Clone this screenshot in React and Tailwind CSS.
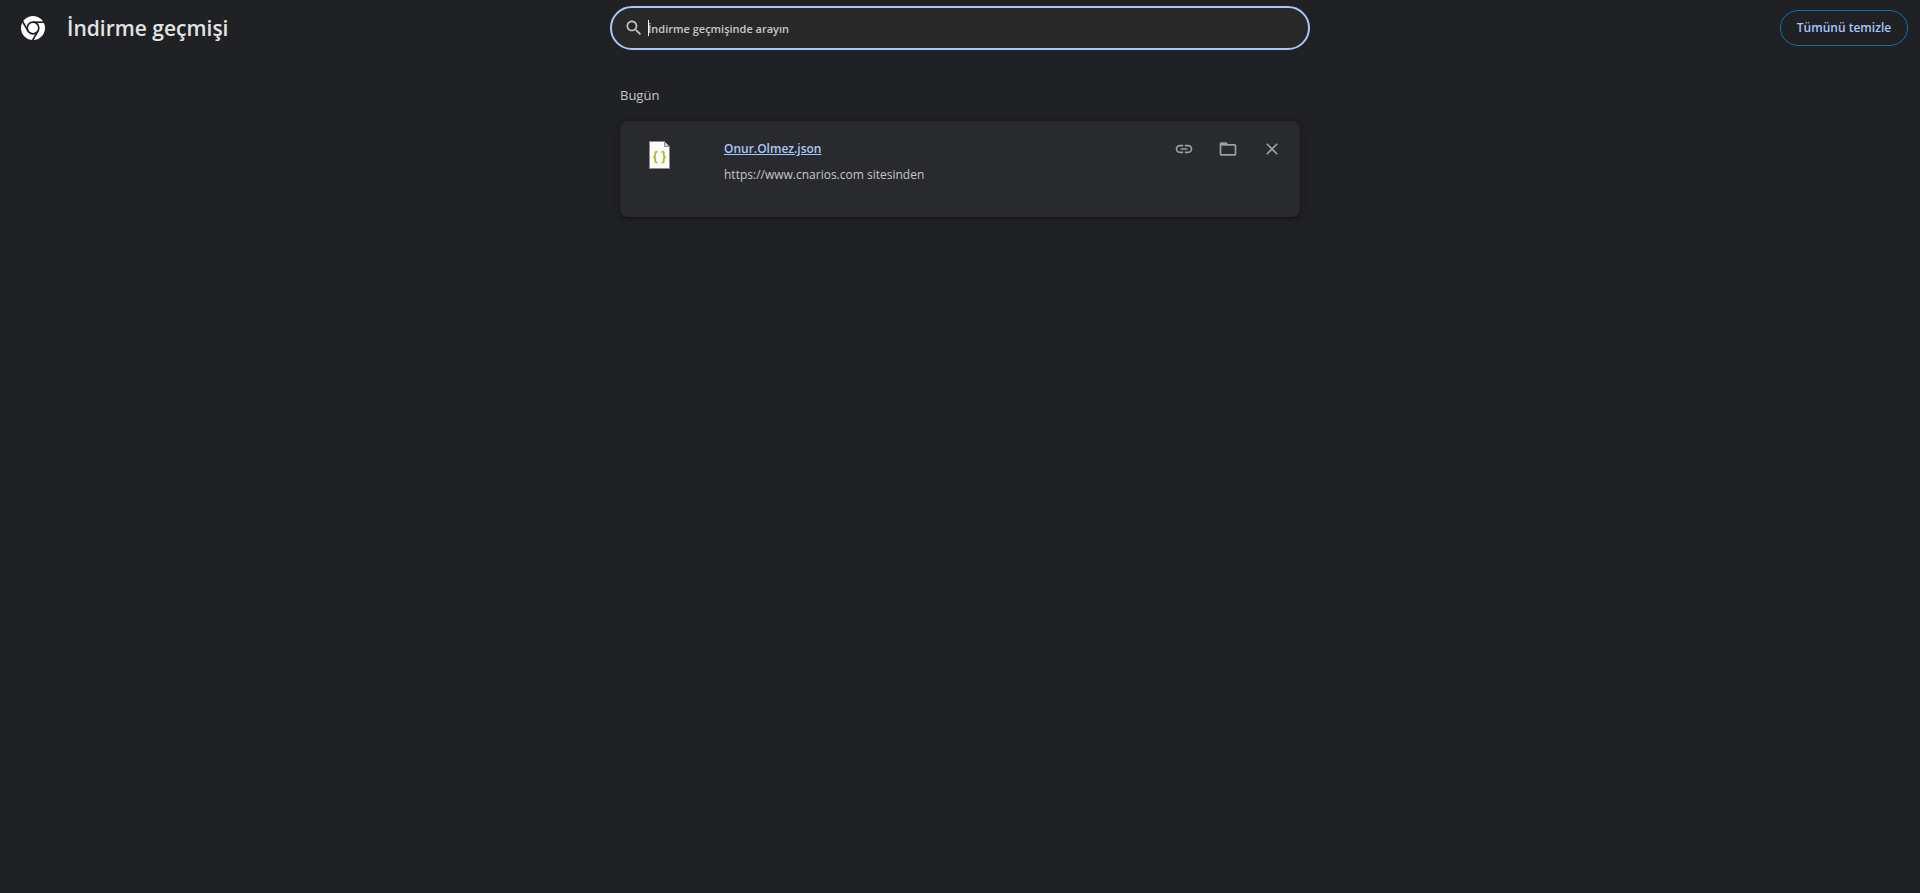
import React from "react";

function ChromeLogo() {
  return (
    <svg viewBox="-12 -12 24 24" className="size-6 shrink-0" aria-hidden="true">
      <circle r="12" fill="#fff" />
      <g fill="none" stroke="#202124" strokeWidth="1.7">
        <circle r="5.8" />
        <path d="M0-5.800H12" />
        <path d="M0-5.800H12" transform="rotate(120)" />
        <path d="M0-5.800H12" transform="rotate(240)" />
      </g>
    </svg>
  );
}

function FileIcon() {
  return (
    <svg viewBox="0 0 32 32" className="size-8" aria-hidden="true">
      <path d="M5.500 2.500H20.500L25.500 7.500V29.500H5.500Z" fill="#fcfcfc" stroke="#8b8c8e" />
      <path d="M20.500 2.500V7.500H25.500Z" fill="#d4d5d6" stroke="#8b8c8e" />
      <path
        d="M13.500 12.800h-.8q-1.500 0-1.500 1.500v2q0 1.700-1.900 1.900q1.900.2 1.900 1.900v2q0 1.500 1.500 1.500h.8M17.500 12.800h.8q1.500 0 1.500 1.500v2q0 1.700 1.900 1.900q-1.900.2-1.900 1.900v2q0 1.500-1.500 1.500h-.8"
        fill="none"
        stroke="#bcb83a"
        strokeWidth="1.9"
      />
    </svg>
  );
}

const actions = [
  {
    label: "İndirme bağlantısını kopyala",
    path: "M3.900 12c0-1.710 1.390-3.100 3.100-3.100h4V7H7c-2.760 0-5 2.240-5 5s2.240 5 5 5h4v-1.900H7c-1.710 0-3.100-1.390-3.100-3.100zM8 13h8v-2H8v2zm9-6h-4v1.900h4c1.710 0 3.100 1.390 3.100 3.100s-1.390 3.100-3.100 3.100h-4V17h4c2.760 0 5-2.240 5-5s-2.240-5-5-5z",
  },
  {
    label: "Klasörde göster",
    path: "M20 6h-8l-2-2H4c-1.100 0-1.990.9-1.990 2L2 18c0 1.100.9 2 2 2h16c1.100 0 2-.9 2-2V8c0-1.100-.9-2-2-2zm0 12H4V8h16v10z",
  },
  {
    label: "Listeden kaldır",
    path: "M19 6.410L17.590 5 12 10.590 6.410 5 5 6.410 10.590 12 5 17.590 6.410 19 12 13.410 17.590 19 19 17.590 13.410 12z",
  },
];

function Toolbar() {
  return (
    <header className="grid h-14 grid-cols-[1fr_minmax(0,700px)_1fr] items-center">
      <div className="flex items-center gap-[22px] pl-[21px]">
        <ChromeLogo />
        <h1 className="text-[21px] leading-8 font-semibold whitespace-nowrap text-[#e3e3e3]">
          İndirme geçmişi
        </h1>
      </div>
      <div className="relative flex h-11 items-center gap-1 rounded-full border-2 border-[#a8c7fa] bg-[#282828] pr-4 pl-3">
        <svg viewBox="0 0 24 24" className="size-5 shrink-0" fill="#c7c7c7" aria-hidden="true">
          <path d="M15.500 14h-.79l-.28-.27C15.410 12.590 16 11.110 16 9.500 16 5.910 13.090 3 9.500 3S3 5.910 3 9.500 5.910 16 9.500 16c1.610 0 3.090-.59 4.230-1.570l.27.28v.79l5 4.990L20.490 19l-4.990-5zm-6 0C7.010 14 5 11.990 5 9.500S7.010 5 9.500 5 14 7.010 14 9.500 11.990 14 9.500 14z" />
        </svg>
        <input
          type="text"
          aria-label="İndirme geçmişinde arayın"
          placeholder="İndirme geçmişinde arayın"
          className="min-w-0 flex-1 bg-transparent pt-0.5 text-[11px] leading-4 font-semibold text-[#e3e3e3] outline-none placeholder:text-[#c7c7c7]"
        />
        <span className="absolute left-9 h-4 w-px bg-white" />
      </div>
      <div className="flex justify-end pr-3">
        <button
          type="button"
          className="h-9 w-32 rounded-full border border-[#0a77ab] text-[12px] font-semibold whitespace-nowrap text-[#a8c7fa]"
        >
          Tümünü temizle
        </button>
      </div>
    </header>
  );
}

function DownloadCard() {
  return (
    <article className="flex h-24 rounded-lg bg-[#292a2d] shadow-[0_1px_2px_rgba(0,0,0,0.3),0_1px_6px_2px_rgba(0,0,0,0.15)]">
      <div className="w-[104px] shrink-0 pt-[18px] pl-6">
        <FileIcon />
      </div>
      <div className="min-w-0 flex-1 pt-[18px]">
        <a
          href="#Onur.Olmez.json"
          className="block w-fit text-[12px] leading-5 font-semibold text-[#a8c7fa] underline"
        >
          Onur.Olmez.json
        </a>
        <p className="mt-[6px] text-[12px] leading-5 text-[#c7c7c7]">
          https://www.cnarios.com sitesinden
        </p>
      </div>
      <div className="flex gap-2 pt-[10px] pr-[10px]">
        {actions.map((action) => (
          <button
            key={action.label}
            type="button"
            aria-label={action.label}
            className="flex size-9 items-center justify-center rounded-full"
          >
            <svg viewBox="0 0 24 24" className="size-5" fill="#9aa0a6" aria-hidden="true">
              <path d={action.path} />
            </svg>
          </button>
        ))}
      </div>
    </article>
  );
}

export default function App() {
  return (
    <div className="min-h-screen bg-[#202124] font-['Open_Sans','Noto_Sans',sans-serif]">
      <Toolbar />
      <main className="mx-auto w-full max-w-[680px] pt-[29px]">
        <h2 className="mb-4 text-[13px] leading-5 text-[#c7c7c7]">Bugün</h2>
        <DownloadCard />
      </main>
    </div>
  );
}
